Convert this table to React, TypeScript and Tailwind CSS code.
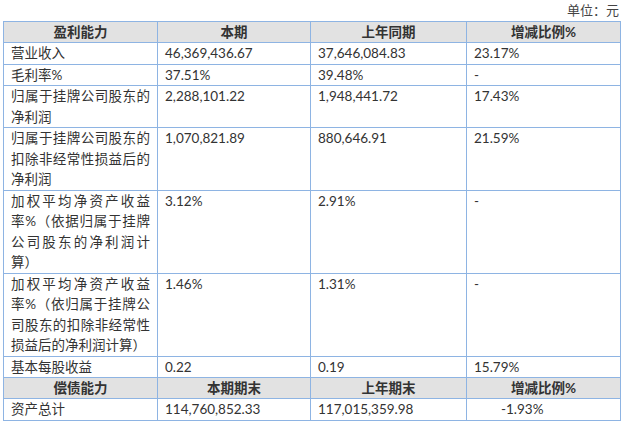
import React from "react"

const FONT = "font-['Lato','Noto_Sans_CJK_SC',sans-serif]"

type Row = { label: string; a: string; b: string; c: string; cClass?: string }

const profit: Row[] = [
  { label: "营业收入", a: "46,369,436.67", b: "37,646,084.83", c: "23.17%" },
  { label: "毛利率%", a: "37.51%", b: "39.48%", c: "-" },
  { label: "归属于挂牌公司股东的净利润", a: "2,288,101.22", b: "1,948,441.72", c: "17.43%" },
  { label: "归属于挂牌公司股东的扣除非经常性损益后的净利润", a: "1,070,821.89", b: "880,646.91", c: "21.59%" },
  { label: "加权平均净资产收益率%（依据归属于挂牌公司股东的净利润计算）", a: "3.12%", b: "2.91%", c: "-" },
  { label: "加权平均净资产收益率%（依归属于挂牌公司股东的扣除非经常性损益后的净利润计算）", a: "1.46%", b: "1.31%", c: "-" },
  { label: "基本每股收益", a: "0.22", b: "0.19", c: "15.79%" },
]

function Header({ cols }: { cols: string[] }) {
  return (
    <tr className="bg-[#e2e2e2]">
      {cols.map((c) => (
        <th key={c} className="border border-[#8eb4e3] h-[21px] p-0 text-center font-bold leading-[20px]">
          {c}
        </th>
      ))}
    </tr>
  )
}

function Body({ row }: { row: Row }) {
  return (
    <tr>
      <td className="border border-[#8eb4e3] h-[21px] px-[7px] py-0 align-top text-justify leading-[20.5px]">{row.label}</td>
      <td className="border border-[#8eb4e3] px-[7px] py-0 align-top leading-[20px]">{row.a}</td>
      <td className="border border-[#8eb4e3] px-[7px] py-0 align-top leading-[20px]">{row.b}</td>
      <td className={`border border-[#8eb4e3] py-0 align-top leading-[20px] ${row.cClass ?? "px-[7px]"}`}>{row.c}</td>
    </tr>
  )
}

export default function App() {
  return (
    <div className={`w-[627px] h-[421px] bg-white text-[#333333] text-[13.5px] ${FONT}`}>
      <div className="h-[21px] pr-[8px] text-right text-[13px] leading-[20px] text-[#444444]">单位：元</div>
      <table className="ml-[3px] border-collapse table-fixed w-[617px]">
        <colgroup>
          <col className="w-[154px]" />
          <col className="w-[153px]" />
          <col className="w-[156px]" />
          <col className="w-[154px]" />
        </colgroup>
        <tbody>
          <Header cols={["盈利能力", "本期", "上年同期", "增减比例%"]} />
          {profit.map((r) => (
            <Body key={r.label} row={r} />
          ))}
          <Header cols={["偿债能力", "本期期末", "上年期末", "增减比例%"]} />
          <Body row={{ label: "资产总计", a: "114,760,852.33", b: "117,015,359.98", c: "-1.93%", cClass: "pl-[34px] pr-[7px]" }} />
        </tbody>
      </table>
    </div>
  )
}
